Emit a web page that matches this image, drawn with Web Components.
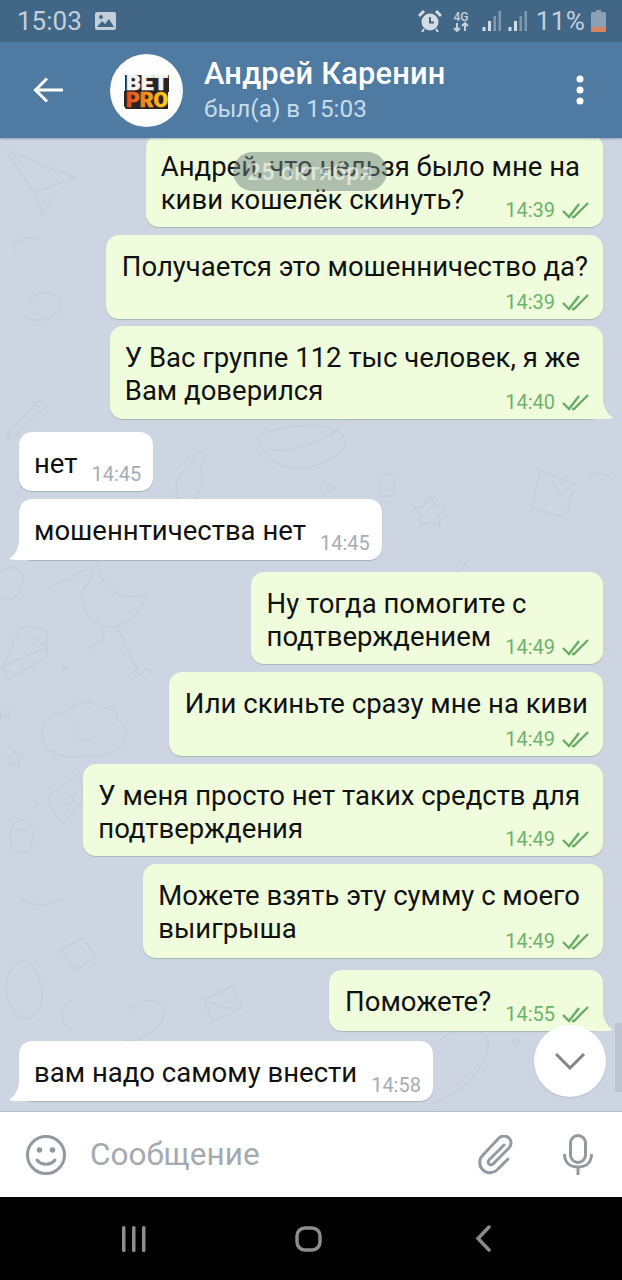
<!DOCTYPE html>
<html lang="ru">
<head>
<meta charset="utf-8">
<title>Андрей Каренин</title>
<style>
  html, body { margin: 0; padding: 0; background: #000; }
  body { font-family: Roboto, "Noto Sans", sans-serif; }
  phone-screen { height: 1280px; }
</style>
</head>
<body>
<phone-screen>
  <status-bar></status-bar>
  <chat-header name="Андрей Каренин" status="был(а) в 15:03"></chat-header>
  <chat-view>
    <date-pill slot="overlay">25 октября</date-pill>
    <chat-bubble out wide time="14:39" style="height:92px">Андрей, что нельзя было мне на<span slot="last">киви кошелёк скинуть?</span></chat-bubble>
    <chat-bubble out stacked time="14:39" style="margin-top:8px;height:84px">Получается это мошенничество да?</chat-bubble>
    <chat-bubble out wide tail time="14:40" style="margin-top:7px;height:93px;--gap:7px">У Вас группе 112 тыс человек, я же<span slot="last">Вам доверился</span></chat-bubble>
    <chat-bubble time="14:45" style="margin-top:13px;height:59px"><span slot="last">нет</span></chat-bubble>
    <chat-bubble tail time="14:45" style="margin-top:8px;height:61px;--gap:8px"><span slot="last">мошеннтичества нет</span></chat-bubble>
    <chat-bubble out time="14:49" style="margin-top:12px;height:92px">Ну тогда помогите с<span slot="last">подтверждением</span></chat-bubble>
    <chat-bubble out stacked time="14:49" style="margin-top:8px;height:84px">Или скиньте сразу мне на киви</chat-bubble>
    <chat-bubble out wide time="14:49" style="margin-top:8px;height:92px">У меня просто нет таких средств для<span slot="last">подтверждения</span></chat-bubble>
    <chat-bubble out wide time="14:49" style="margin-top:8px;height:94px;--gap:8px">Можете взять эту сумму с моего<span slot="last">выигрыша</span></chat-bubble>
    <chat-bubble out tail time="14:55" style="margin-top:12px;height:61px;--gap:8px"><span slot="last">Поможете?</span></chat-bubble>
    <chat-bubble tail time="14:58" style="margin-top:10px;height:60px;--gap:8px"><span slot="last">вам надо самому внести</span></chat-bubble>
  </chat-view>
  <message-input placeholder="Сообщение"></message-input>
  <nav-bar></nav-bar>
</phone-screen>

<script>
class PhoneScreen extends HTMLElement {
  constructor() {
    super();
    this.attachShadow({ mode: 'open' });
    this.shadowRoot.innerHTML = `
      <style>
        :host { display: flex; flex-direction: column; width: 622px; overflow: hidden; }
      </style>
      <slot></slot>
    `;
  }
}

class StatusBar extends HTMLElement {
  constructor() {
    super();
    this.attachShadow({ mode: 'open' });
    const bars = `
      <rect x="0.500" y="16" width="3" height="4" fill="#d3dbe3"/>
      <rect x="6" y="10" width="3" height="10" fill="#d3dbe3"/>
      <rect x="11.500" y="5" width="2.500" height="15" fill="#7f99b0"/>
      <rect x="16.500" y="0" width="2.500" height="20" fill="#7f99b0"/>`;
    this.shadowRoot.innerHTML = `
      <style>
        :host {
          display: flex; align-items: center; height: 42px; flex: none;
          padding: 0 16px 0 17px; box-sizing: border-box;
          background: #426686; color: #c3d0dc;
          font: 400 26px Roboto, sans-serif;
        }
        .time { width: 78px; }
        .spacer { flex: 1; }
        .pct { margin: 0 6px 0 9px; letter-spacing: .3px; }
        svg { display: block; flex: none; }
      </style>
      <span class="time">15:03</span>
      <svg width="21" height="18" viewBox="0 0 21 18">
        <rect width="21" height="18" rx="2" fill="#c3d0dc"/>
        <path d="M2 15l5-6 3 3 4-5 5 8z" fill="#426686"/>
        <circle cx="6" cy="5" r="2" fill="#426686"/>
      </svg>
      <span class="spacer"></span>
      <svg width="24" height="22" viewBox="0 0 24 22">
        <circle cx="12" cy="12" r="8.500" fill="#d3dbe3"/>
        <path d="M12 7v5.500h4" stroke="#426686" stroke-width="2" fill="none"/>
        <path d="M1 6l5-5M23 6l-5-5" stroke="#d3dbe3" stroke-width="3"/>
        <path d="M6 19l-2 3M18 19l2 3" stroke="#d3dbe3" stroke-width="2"/>
      </svg>
      <svg width="18" height="22" viewBox="0 0 18 22" style="margin-left:10px">
        <text x="9" y="11" font-family="Roboto" font-weight="500" font-size="12" fill="#c3d0dc" text-anchor="middle">4G</text>
        <path d="M5 13v8M2 18l3 3 3-3M13 21v-8M10 16l3-3 3 3" stroke="#c3d0dc" stroke-width="2" fill="none"/>
      </svg>
      <svg width="19" height="20" viewBox="0 0 19 20" style="margin-left:12px">${bars}</svg>
      <svg width="19" height="20" viewBox="0 0 19 20" style="margin-left:7px">${bars}</svg>
      <span class="pct">11%</span>
      <svg width="15" height="22" viewBox="0 0 15 22">
        <path d="M5 0h5v2h3.500a1.500 1.500 0 0 1 1.500 1.500V20.500a1.500 1.500 0 0 1-1.500 1.500H1.500A1.500 1.500 0 0 1 0 20.500V3.500A1.500 1.500 0 0 1 1.500 2H5z" fill="#8ba2b6"/>
        <path d="M0 17h15v3.500a1.500 1.500 0 0 1-1.500 1.500H1.500A1.500 1.500 0 0 1 0 20.500z" fill="#d9825f"/>
      </svg>
    `;
  }
}

class ChatHeader extends HTMLElement {
  constructor() {
    super();
    this.attachShadow({ mode: 'open' });
    this.shadowRoot.innerHTML = `
      <style>
        :host {
          display: flex; align-items: center; height: 96px; flex: none;
          background: #4f7aa1; color: #fff; box-sizing: border-box;
          padding: 0 0 0 33px; position: relative; z-index: 2;
          box-shadow: 0 1px 2px rgba(40,60,80,.35);
        }
        .back { width: 30px; height: 26px; flex: none; }
        .avatar { width: 73px; height: 73px; margin-left: 47px; flex: none; }
        .titles { margin-left: 21px; flex: 1; }
        .name { font: 500 30.800px/36px Roboto, sans-serif; letter-spacing: .2px; }
        .status { font: 400 24.300px/30px Roboto, sans-serif; color: #c6dcee; margin-top: 2px; }
        .more { width: 8px; height: 30px; margin-right: 38px; flex: none; }
      </style>
      <svg class="back" viewBox="0 0 30 26" fill="none" stroke="#fff" stroke-width="3">
        <path d="M30 13H3M14 1.500L2.500 13 14 24.500"/>
      </svg>
      <svg class="avatar" viewBox="0 0 73 73">
        <defs>
          <linearGradient id="pro" x1="0" x2="1" y1="0" y2="0">
            <stop offset="0" stop-color="#e8431c"/>
            <stop offset=".55" stop-color="#f39a1e"/>
            <stop offset="1" stop-color="#f8d61f"/>
          </linearGradient>
        </defs>
        <circle cx="36.500" cy="36.500" r="36.500" fill="#fdfdfd"/>
        <path d="M15 21h44v17h-1v17H16l-2-3V37h1z" fill="#2a2422"/>
        <text x="37" y="36" text-anchor="middle" textLength="42" lengthAdjust="spacingAndGlyphs" font-family="Roboto" font-weight="900" font-size="20" fill="#f4f4f4" stroke="#f4f4f4" stroke-width=".6">BET</text>
        <text x="37" y="52.500" text-anchor="middle" textLength="42" lengthAdjust="spacingAndGlyphs" font-family="Roboto" font-weight="900" font-size="20" fill="url(#pro)" stroke="url(#pro)" stroke-width=".6">PRO</text>
      </svg>
      <div class="titles">
        <div class="name"></div>
        <div class="status"></div>
      </div>
      <svg class="more" viewBox="0 0 8 30" fill="#fff">
        <circle cx="4" cy="4" r="3.500"/><circle cx="4" cy="15" r="3.500"/><circle cx="4" cy="26" r="3.500"/>
      </svg>
    `;
  }

  connectedCallback() {
    this.shadowRoot.querySelector('.name').textContent = this.getAttribute('name');
    this.shadowRoot.querySelector('.status').textContent = this.getAttribute('status');
  }
}

class ChatView extends HTMLElement {
  constructor() {
    super();
    this.attachShadow({ mode: 'open' });
    this.shadowRoot.innerHTML = `
      <style>
        :host {
          display: block; position: relative; height: 973px; flex: none;
          background: #cdd5e2; overflow: hidden;
        }
        .paper { position: absolute; left: 0; top: 0; }
        .list {
          position: relative; height: 100%; box-sizing: border-box;
          display: flex; flex-direction: column; justify-content: flex-end;
          padding: 0 19px 10px 19px;
        }
        .scrollbar {
          position: absolute; right: 0; top: 885px; width: 7px; height: 69px;
          background: #bcc4cf;
        }
        .down {
          position: absolute; left: 534px; top: 887px; width: 72px; height: 72px;
          border-radius: 50%; background: #fff;
          box-shadow: 0 1px 2px rgba(60,70,90,.15);
          display: flex; align-items: center; justify-content: center;
        }
      </style>
      <svg class="paper" width="622" height="973" viewBox="0 138 622 973" fill="none" stroke="#c5cedb" stroke-width="1.500" stroke-linecap="round" stroke-linejoin="round">
        <path d="M6 150l70 28-42 14zM34 192l8 22 10-16"/>
        <path d="M10 430l30-30 6 6-30 30-9 3zM34 402l6 6"/>
        <path d="M178 500c-6-14 2-28 12-36l8-14 8 4-6 14c6 12 0 28-10 36"/>
        <path d="M258 436c20-10 50-14 72-8 14 4 20 14 10 24-14 14-44 22-62 12-10-6-20-18-20-28zM270 450c24 2 48-6 68-22M330 436l18-18"/>
        <path d="M380 480c0-8 14-8 14 0v16h-14z"/>
        <circle cx="330" cy="488" r="3"/>
        <path d="M2 572c8-8 20-6 21 8 0 10-8 20-16 20-5 0-7-2-7-4"/>
        <path d="M52 587c8-6 16-8 22-8 2-8 14-10 18-8M92 571c4 10-12 12-10 30 2 14 14 26 30 26 16-1 30-16 35-34-10 6-22 4-30 0-10-6-18-16-20-32M104 628l-1 14-14 4 3 6M117 627l20 43M127 678l8-8 4 6 8-8 6 6"/>
        <path d="M3 667l17-40c8-2 12 2 16 0 4 4 10 2 11 6v24L7 680zM20 627l27 20M3 667l44-20"/>
        <circle cx="65" cy="670" r="2.500"/>
        <path d="M42 736c0-16 12-26 24-22 4-12 24-16 34-6 10-2 18 4 18 12 10 4 12 24 0 28-10 8-22 10-34 8-16 4-42-2-42-20zM74 724v8M88 724v8M78 738c4 4 10 4 12 0"/>
        <path d="M5 704l2 4 5 1-3 4 1 5-5-2-5 2 1-5-3-4 5-1z"/>
        <path d="M15 750l2 5 6 1-4 4 1 6-5-3-6 3 1-6-4-4 6-1z"/>
        <path d="M48 796l32-23 4 26-20 24c-8-4-14-18-16-27zM62 797a6 6 0 1 0 8-3"/>
        <circle cx="37" cy="803" r="1.500"/>
        <path d="M10 838c0-24 23-24 23-2 0 10-5 17-11 17s-12-7-12-15zM15 832c2-4 12-4 14 0"/>
        <path d="M8 1000c-8-22 8-44 20-38 12 8 22 40 6 54-12 8-20-2-26-16z"/>
        <path d="M60 950l22-12 14 18-20 14zM70 1030c-10-8-12-24 2-30"/>
        <path d="M130 1010c14-16 36-10 34 6-2 12-28 30-40 24"/>
        <path d="M204 1000l28-14 10 22-30 14zM204 1000l20 8 18 0"/>
        <path d="M440 1040c18-14 38-14 46-4 8 14-8 38-22 50-10 8-22 14-32 18"/>
        <circle cx="516" cy="1042" r="3"/>
        <path d="M540 470l34 14-8 34-34-10zM552 480l8 14 10-6"/>
        <path d="M424 506l6-10 6 10 10 2-8 8 2 10-10-4-10 4 2-10-8-8z"/>
        <path d="M30 300c14-14 34-6 30 10-6 10-26 14-34 6M14 250c0-10 14-16 24-10"/>
        <path d="M60 900c-12 6-26 6-38 0"/>
        <path d="M20 1078c8-10 22-10 32 0M100 1092l24-12 14 14"/>
        <path d="M440 580c12 0 22-8 26-18M612 650c-10 0-16-8-12-18M612 480c-8-6-14-8-22-6"/>
      </svg>
      <div class="list"><slot></slot></div>
      <slot name="overlay"></slot>
      <div class="scrollbar"></div>
      <div class="down">
        <svg width="32" height="18" viewBox="0 0 32 18" fill="none" stroke="#7f868c" stroke-width="3">
          <path d="M2 2l14 14L30 2"/>
        </svg>
      </div>
    `;
  }
}

class DatePill extends HTMLElement {
  constructor() {
    super();
    this.attachShadow({ mode: 'open' });
    this.shadowRoot.innerHTML = `
      <style>
        :host {
          position: absolute; left: 233px; top: 14px; width: 154px; height: 39px;
          display: flex; align-items: center; justify-content: center;
          border-radius: 20px; background: rgba(110,130,125,.5);
          color: rgba(255,255,255,.62); font: 500 24px Roboto, sans-serif;
        }
      </style>
      <slot></slot>
    `;
  }
}

class ChatBubble extends HTMLElement {
  constructor() {
    super();
    this.attachShadow({ mode: 'open' });
    this.shadowRoot.innerHTML = `
      <style>
        :host {
          display: flex; flex-direction: column; flex: none; position: relative;
          align-self: flex-start; box-sizing: border-box;
          padding: 15px 16px 5px 16px; border-radius: 13px;
          background: #fff; color: #111;
          font: 400 27.500px/33px Roboto, sans-serif;
          white-space: nowrap;
          box-shadow: 0 1px 1px rgba(70,90,110,.28);
          --meta: #a5acb3;
        }
        :host([out]) {
          align-self: flex-end; background: #effddd;
          box-shadow: 0 1px 1px rgba(80,120,70,.3);
          padding-right: 15px;
          --meta: #6db36a;
        }
        :host([wide]) { padding-left: 15px; padding-right: 23px; }
        :host(:not([out])) { padding-left: 15px; }
        .row { display: flex; align-items: flex-end; margin-top: auto; }
        .row ::slotted(*) { margin-bottom: var(--gap, 6px); }
        .meta {
          display: flex; align-items: center; gap: 7px; height: 24px;
          margin-left: auto; margin-right: -2px; padding-left: 14px; color: var(--meta);
          font: 400 20px/24px Roboto, sans-serif;
        }
        :host(:not([out])) .meta { margin-right: -4px; }
        :host([wide]) .meta { margin-right: -10px; }
        :host([stacked]) .first { margin-bottom: 7px; }
        .check { display: none; }
        :host([out]) .check { display: block; }
        .tail { display: none; position: absolute; bottom: 0; width: 24px; height: 20px; }
        :host([tail]) .tail { display: block; left: -10px; }
        :host([tail][out]) .tail { left: auto; right: -10px; transform: scaleX(-1); }
      </style>
      <span class="first"><slot></slot></span>
      <div class="row">
        <slot name="last"></slot>
        <span class="meta">
          <span class="time"></span>
          <svg class="check" width="28" height="17" viewBox="0 0 28 17" fill="none" stroke="#69ac67" stroke-width="2.400">
            <path d="M1 9l6 6L17 2M10 15l2 0L26 1"/>
          </svg>
        </span>
      </div>
      <svg class="tail" viewBox="0 0 24 20"><path d="M10 0C10 8 6 15 0 19 4 20 7 20 10 20H24V8H14V0z" fill="currentColor"/></svg>
    `;
  }

  connectedCallback() {
    this.shadowRoot.querySelector('.time').textContent = this.getAttribute('time');
    this.shadowRoot.querySelector('.tail').style.color = this.hasAttribute('out') ? '#effddd' : '#fff';
  }
}

class MessageInput extends HTMLElement {
  constructor() {
    super();
    this.attachShadow({ mode: 'open' });
    this.shadowRoot.innerHTML = `
      <style>
        :host {
          display: flex; align-items: center; height: 86px; flex: none;
          background: #fff; box-sizing: border-box; padding: 0 29px 0 26px;
          border-top: 1px solid #b6bdc4;
        }
        .ph { flex: 1; margin-left: 24px; color: #a3aab0; font: 400 31.500px Roboto, sans-serif; }
        svg { display: block; flex: none; }
      </style>
      <svg width="40" height="40" viewBox="0 0 40 40" fill="none" stroke="#92999f" stroke-width="3">
        <circle cx="20" cy="20" r="18.500"/>
        <circle cx="13.500" cy="15" r="2.800" fill="#92999f" stroke="none"/>
        <circle cx="26.500" cy="15" r="2.800" fill="#92999f" stroke="none"/>
        <path d="M11 25c4 5.500 14 5.500 18 0" stroke-linecap="round"/>
      </svg>
      <span class="ph"></span>
      <svg width="36" height="40" viewBox="0 0 36 40" fill="none" stroke="#92999f" stroke-width="3" stroke-linecap="round">
        <path d="M26 10L11 25a2.500 2.500 0 0 0 4 4L31 13a7 7 0 0 0-10-10L5 20a10 10 0 0 0 14 15L30 24"/>
      </svg>
      <svg width="30" height="41" viewBox="0 0 30 41" fill="none" stroke="#92999f" stroke-width="3" style="margin-left:49px">
        <rect x="7.500" y="1.500" width="15" height="27" rx="7.500"/>
        <path d="M1.500 20c0 9 6 13 13.500 13s13.500-4 13.500-13M15 33v8"/>
      </svg>
    `;
  }

  connectedCallback() {
    this.shadowRoot.querySelector('.ph').textContent = this.getAttribute('placeholder');
  }
}

class NavBar extends HTMLElement {
  constructor() {
    super();
    this.attachShadow({ mode: 'open' });
    this.shadowRoot.innerHTML = `
      <style>
        :host {
          display: grid; grid-template-columns: 278px 60px 1fr; align-items: center;
          height: 83px; flex: none; background: #000;
        }
        svg { display: block; justify-self: center; }
        .menu { justify-self: end; margin-right: 132px; }
        .back { justify-self: start; margin-left: 137px; }
      </style>
      <svg class="menu" width="24" height="26" viewBox="0 0 24 26" fill="#8c8c8c">
        <rect x="0" y="0" width="3.500" height="26" rx="1.500"/>
        <rect x="10" y="0" width="3.500" height="26" rx="1.500"/>
        <rect x="20" y="0" width="3.500" height="26" rx="1.500"/>
      </svg>
      <svg width="27" height="26" viewBox="0 0 27 26" fill="none" stroke="#8c8c8c" stroke-width="3.500">
        <rect x="2" y="2" width="23" height="22" rx="8"/>
      </svg>
      <svg class="back" width="16" height="27" viewBox="0 0 16 27" fill="none" stroke="#8c8c8c" stroke-width="3.500" stroke-linecap="round">
        <path d="M14 2L3 13.500 14 25"/>
      </svg>
    `;
  }
}

customElements.define('phone-screen', PhoneScreen);
customElements.define('status-bar', StatusBar);
customElements.define('chat-header', ChatHeader);
customElements.define('chat-view', ChatView);
customElements.define('date-pill', DatePill);
customElements.define('chat-bubble', ChatBubble);
customElements.define('message-input', MessageInput);
customElements.define('nav-bar', NavBar);
</script>
</body>
</html>
